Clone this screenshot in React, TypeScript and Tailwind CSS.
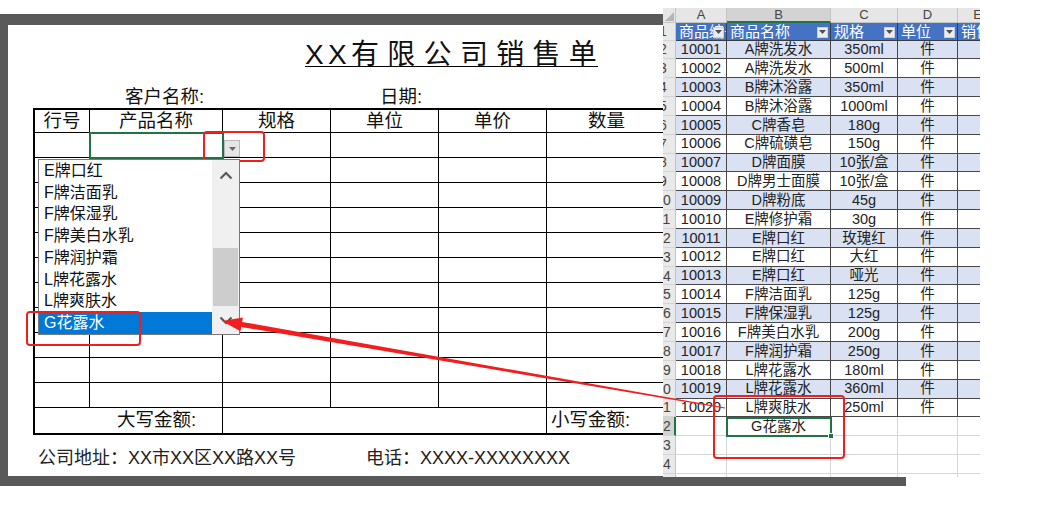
import React from "react";

const data: [string, string, string][] = [
  ["10001", "A牌洗发水", "350ml"],
  ["10002", "A牌洗发水", "500ml"],
  ["10003", "B牌沐浴露", "350ml"],
  ["10004", "B牌沐浴露", "1000ml"],
  ["10005", "C牌香皂", "180g"],
  ["10006", "C牌硫磺皂", "150g"],
  ["10007", "D牌面膜", "10张/盒"],
  ["10008", "D牌男士面膜", "10张/盒"],
  ["10009", "D牌粉底", "45g"],
  ["10010", "E牌修护霜", "30g"],
  ["10011", "E牌口红", "玫瑰红"],
  ["10012", "E牌口红", "大红"],
  ["10013", "E牌口红", "哑光"],
  ["10014", "F牌洁面乳", "125g"],
  ["10015", "F牌保湿乳", "125g"],
  ["10016", "F牌美白水乳", "200g"],
  ["10017", "F牌润护霜", "250g"],
  ["10018", "L牌花露水", "180ml"],
  ["10019", "L牌花露水", "360ml"],
  ["10020", "L牌爽肤水", "250ml"],
];

const listItems = ["E牌口红", "F牌洁面乳", "F牌保湿乳", "F牌美白水乳", "F牌润护霜", "L牌花露水", "L牌爽肤水"];

function ChevronUp() {
  return (
    <svg width="14" height="9" viewBox="0 0 14 9">
      <polyline points="1.5,7.5 7,2 12.5,7.5" fill="none" stroke="#5a5a5a" strokeWidth="2.2" />
    </svg>
  );
}

function ChevronDown() {
  return (
    <svg width="14" height="9" viewBox="0 0 14 9">
      <polyline points="1.5,1.5 7,7 12.5,1.5" fill="none" stroke="#5a5a5a" strokeWidth="2.2" />
    </svg>
  );
}

function FilterBtn() {
  return (
    <div className="absolute right-[2px] top-[4px] w-[11px] h-[11px] bg-[#ececec] border border-[#c9cfdc] flex items-center justify-center">
      <svg width="7" height="4" viewBox="0 0 7 4">
        <polygon points="0,0 7,0 3.5,4" fill="#505050" />
      </svg>
    </div>
  );
}

function RowHead({ n, active }: { n: number | string; active?: boolean }) {
  return (
    <div
      className={
        "w-[13px] shrink-0 overflow-hidden border-b border-[#d4d4d4] flex items-center " +
        (active ? "bg-[#d2d2d2] border-r-2 border-r-[#217346]" : "bg-[#e9e9e9] border-r border-r-[#c4c4c4]")
      }
    >
      <span className="block w-[26px] ml-[-13px] shrink-0 text-center text-[14px] text-[#444] leading-none">{n}</span>
    </div>
  );
}

const colW = ["w-[51px]", "w-[104px]", "w-[67px]", "w-[60px]", "w-[40px]"];

function LeftSheet() {
  const title = ["X", "X", "有", "限", "公", "司", "销", "售", "单"];
  return (
    <>
      <div className="flex pl-[297px] pt-[19px]">
        <div className="flex border-b border-black h-[23px] items-center text-[28px] leading-[22px] text-[#111]">
          {title.map((c, i) => (
            <span
              key={i}
              className={i < 2 ? "w-[23px]" : i === title.length - 1 ? "w-[29px]" : "w-[36.3px]"}
            >
              {c}
            </span>
          ))}
        </div>
      </div>
      <div className="flex pl-[117px] mt-[19px] h-[22px] items-center text-[18.5px] leading-[22px] text-[#111]">
        <span className="w-[255px]">客户名称:</span>
        <span>日期:</span>
      </div>
      <div className="ml-[25px] w-[640px] border-t-2 border-l-2 border-b-2 border-black text-[18.5px] text-[#111]">
        <div className="flex h-[23px]">
          {[
            ["w-[55px]", "行号"],
            ["w-[133px]", "产品名称"],
            ["w-[108px]", "规格"],
            ["w-[108px]", "单位"],
            ["w-[108px]", "单价"],
            ["w-[120px]", "数量"],
          ].map(([w, t]) => (
            <div key={t} className={w + " shrink-0 border-r border-b border-black flex items-center justify-center leading-none"}>
              {t}
            </div>
          ))}
        </div>
        {Array.from({ length: 11 }).map((_, r) => (
          <div key={r} className="flex h-[25px]">
            {["w-[55px]", "w-[133px]", "w-[108px]", "w-[108px]", "w-[108px]", "w-[120px]"].map((w, i) => (
              <div key={i} className={w + " shrink-0 border-r border-b border-black"} />
            ))}
          </div>
        ))}
        <div className="flex h-[25px]">
          <div className="w-[188px] shrink-0 border-r border-black flex items-center pl-[82px] leading-none">大写金额:</div>
          <div className="w-[324px] shrink-0 border-r border-black" />
          <div className="w-[120px] shrink-0 flex items-center pl-[4px] leading-none">小写金额:</div>
        </div>
      </div>
      <div className="flex pl-[30px] mt-[11px] h-[24px] items-center text-[18px] leading-[24px] text-[#222]">
        <span className="w-[328px]">公司地址：XX市XX区XX路XX号</span>
        <span>电话：XXXX-XXXXXXXX</span>
      </div>

      {/* selected cell */}
      <div className="absolute left-[81px] top-[107px] w-[135px] h-[27px] border-2 border-[#217346]" />
      {/* validation button */}
      <div className="absolute left-[216px] top-[115px] w-[16px] h-[17px] bg-[#e6e6e6] border border-[#b9b9b9] flex items-center justify-center">
        <svg width="7" height="4" viewBox="0 0 7 4">
          <polygon points="0,0 7,0 3.5,4" fill="#6a6a6a" />
        </svg>
      </div>
      <div className="absolute left-[195px] top-[106px] w-[62px] h-[31px] border-2 border-[#f01e1e] rounded-[4px]" />

      {/* dropdown list */}
      <div className="absolute left-[30px] top-[134px] w-[202px] h-[176px] bg-white border border-[#7a7a7a] flex text-[16px] text-[#111]">
        <div className="flex-1 flex flex-col">
          {listItems.map((t) => (
            <div key={t} className="h-[22px] flex items-center pl-[5px] leading-none">
              {t}
            </div>
          ))}
          <div className="h-[22px] flex items-center pl-[5px] leading-none bg-[#0078d7] text-white">G花露水</div>
        </div>
        <div className="w-[27px] bg-[#f0f0f0] flex flex-col">
          <div className="h-[30px] flex items-center justify-center">
            <ChevronUp />
          </div>
          <div className="h-[58px]" />
          <div className="h-[58px] bg-[#cdcdcd] mx-[1px]" />
          <div className="flex-1 flex items-center justify-center">
            <ChevronDown />
          </div>
        </div>
      </div>
      <div className="absolute left-[18px] top-[286px] w-[115px] h-[35px] border-2 border-[#f01e1e] rounded-[4px]" />
    </>
  );
}

function RightSheet() {
  const letters = ["A", "B", "C", "D", "E"];
  const heads = ["商品编号", "商品名称", "规格", "单位", "销售"];
  return (
    <div className="absolute left-[663px] top-[8px] w-[317px] h-[469px] overflow-hidden bg-white text-[#222]">
      {/* column letters */}
      <div className="flex h-[14.5px]">
        <div className="w-[13px] shrink-0 bg-[#e6e6e6] border-r border-b border-[#c4c4c4] relative overflow-hidden">
          <svg className="absolute right-[1px] bottom-[1px]" width="9" height="9" viewBox="0 0 9 9">
            <polygon points="9,0 9,9 0,9" fill="#b4b4b4" />
          </svg>
        </div>
        {letters.map((l, i) => (
          <div
            key={l}
            className={
              colW[i] +
              " shrink-0 border-r border-[#c4c4c4] flex items-center justify-center text-[13px] leading-none text-[#444] " +
              (i === 1 ? "bg-[#d3d3d3] border-b-2 border-b-[#217346]" : "bg-[#e6e6e6] border-b border-b-[#c4c4c4]")
            }
          >
            {l}
          </div>
        ))}
      </div>
      {/* table header */}
      <div className="flex h-[18px]">
        <RowHead n={1} />
        {heads.map((h, i) => (
          <div
            key={h}
            className={
              colW[i] +
              " shrink-0 relative bg-[#4472c4] border-r border-b border-[#3b3b3b] text-white text-[15px] leading-none flex items-center pl-[3px] overflow-hidden whitespace-nowrap"
            }
          >
            {h}
            {i < 4 && <FilterBtn />}
          </div>
        ))}
      </div>
      {data.map((r, idx) => (
        <div key={r[0]} className="flex h-[18.85px]">
          <RowHead n={idx + 2} />
          {[r[0], r[1], r[2], "件", ""].map((c, i) => (
            <div
              key={i}
              className={
                colW[i] +
                " shrink-0 border-r border-b border-[#484848] flex items-center justify-center text-[14.5px] leading-none whitespace-nowrap " +
                (idx % 2 === 0 ? "bg-[#d9e1f2]" : "bg-white")
              }
            >
              {c}
            </div>
          ))}
        </div>
      ))}
      {[22, 23, 24, 25].map((n) => (
        <div key={n} className="flex h-[18.85px]">
          <RowHead n={n} active={n === 22} />
          {colW.map((w, i) => (
            <div
              key={i}
              className={w + " shrink-0 border-r border-b border-[#d6d6d6] flex items-center justify-center text-[14.5px] leading-none"}
            >
              {n === 22 && i === 1 ? "G花露水" : ""}
            </div>
          ))}
        </div>
      ))}
      {/* selection B22 */}
      <div className="absolute left-[63px] top-[408.5px] w-[106px] h-[20.85px] border-2 border-[#217346]">
        <div className="absolute right-[-4px] bottom-[-4px] w-[6px] h-[6px] bg-[#217346] border border-white" />
      </div>
      <div className="absolute left-[50px] top-[387px] w-[132px] h-[64px] border-2 border-[#f01e1e] rounded-[4px]" />
    </div>
  );
}

export default function App() {
  return (
    <div className="relative w-[1063px] h-[513px] bg-white overflow-hidden font-['Liberation_Sans','Noto_Sans_CJK_SC',sans-serif]">
      <div className="mt-[14px] w-[906px] h-[472px] border-l-[8px] border-t-[11px] border-b-[10px] border-[#595959] bg-white relative">
        <LeftSheet />
      </div>
      <RightSheet />
      <svg className="absolute left-0 top-0 pointer-events-none" width="1063" height="513" viewBox="0 0 1063 513">
        <polygon
          points="222,321 242.9,317.5 242.1,321.9 725.1,407.5 724.9,408.5 241.3,326.9 240.5,331.3"
          fill="#f01e1e"
        />
      </svg>
    </div>
  );
}
